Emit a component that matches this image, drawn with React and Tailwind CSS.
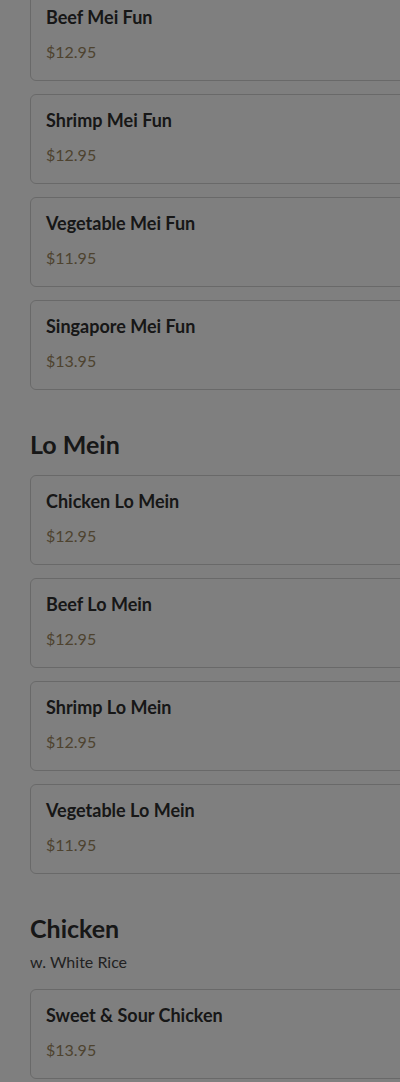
import React from 'react';

const sections = [
  {
    name: null,
    items: [
      { name: 'Beef Mei Fun', price: '$12.95' },
      { name: 'Shrimp Mei Fun', price: '$12.95' },
      { name: 'Vegetable Mei Fun', price: '$11.95' },
      { name: 'Singapore Mei Fun', price: '$13.95' },
    ],
  },
  {
    name: 'Lo Mein',
    items: [
      { name: 'Chicken Lo Mein', price: '$12.95' },
      { name: 'Beef Lo Mein', price: '$12.95' },
      { name: 'Shrimp Lo Mein', price: '$12.95' },
      { name: 'Vegetable Lo Mein', price: '$11.95' },
    ],
  },
  {
    name: 'Chicken',
    note: 'w. White Rice',
    items: [{ name: 'Sweet & Sour Chicken', price: '$13.95' }],
  },
];

const MenuCard = ({ item }) => (
  <div className="w-[400px] h-[90px] shrink-0 bg-white border border-[#d2d2d2] rounded-md pt-[13px] px-[15px]">
    <div className="text-[18px] leading-[24px] font-bold text-[#2e2e2e]">{item.name}</div>
    <div className="mt-[12px] text-[16px] leading-[22px] text-[#9c8760]">{item.price}</div>
  </div>
);

const App = () => {
  return (
    <div
      className="relative h-[1082px] overflow-hidden bg-white"
      style={{ fontFamily: 'Lato, "Noto Sans", sans-serif' }}
    >
      <div className="-mt-[9px] pl-[30px]">
        {sections.map((section, i) => (
          <div key={i} className={i > 0 ? 'mt-[38px]' : ''}>
            {section.name && (
              <div className="mb-[15px]">
                <h2 className="text-[25px] leading-[32px] font-bold text-[#2e2e2e]">{section.name}</h2>
                {section.note && (
                  <p className="mt-[6px] mb-[8px] text-[16px] leading-[24px] text-[#444]">{section.note}</p>
                )}
              </div>
            )}
            <div className="flex flex-col gap-[13px]">
              {section.items.map(item => (
                <MenuCard key={item.name} item={item} />
              ))}
            </div>
          </div>
        ))}
      </div>
      <div className="fixed inset-0 bg-black/50" />
    </div>
  );
};

export default App;
